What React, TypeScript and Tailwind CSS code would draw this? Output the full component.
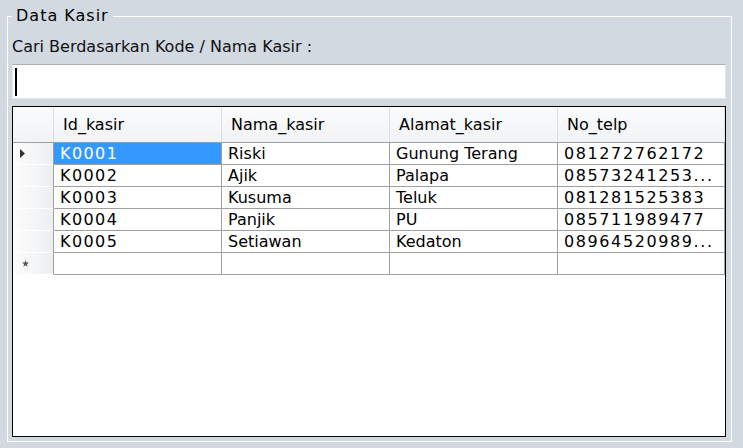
import React from "react";

interface KasirRow {
  id: string;
  nama: string;
  alamat: string;
  telp: string;
}

const rows: KasirRow[] = [
  { id: "K0001", nama: "Riski", alamat: "Gunung Terang", telp: "081272762172" },
  { id: "K0002", nama: "Ajik", alamat: "Palapa", telp: "08573241253..." },
  { id: "K0003", nama: "Kusuma", alamat: "Teluk", telp: "081281525383" },
  { id: "K0004", nama: "Panjik", alamat: "PU", telp: "085711989477" },
  { id: "K0005", nama: "Setiawan", alamat: "Kedaton", telp: "08964520989..." },
];

const headers = ["Id_kasir", "Nama_kasir", "Alamat_kasir", "No_telp"];

const gridCols = "grid grid-cols-[41px_168px_168px_168px_1fr]";

const RowHeader: React.FC<{ current?: boolean; isNew?: boolean }> = ({ current, isNew }) => (
  <div className="h-[22px] flex items-center pl-[7px] border-r border-r-[#a0a0a0] border-b border-b-white bg-gradient-to-r from-[#fdfdfd] to-[#eceef1]">
    {current && (
      <svg width="6" height="9" viewBox="0 0 6 9">
        <path d="M0 0 L5 4.5 L0 9 Z" fill="#333" />
      </svg>
    )}
    {isNew && (
      <svg width="7" height="7" viewBox="0 0 10 10" className="ml-[2px]">
        <path d="M5 0 L6.2 3.5 L10 3.6 L7 5.9 L8.1 9.6 L5 7.4 L1.9 9.6 L3 5.9 L0 3.6 L3.8 3.5 Z" fill="#555" />
      </svg>
    )}
  </div>
);

const Cell: React.FC<{ children?: React.ReactNode; selected?: boolean; tracking?: string }> = ({
  children,
  selected,
  tracking = "",
}) => (
  <div
    className={`h-[22px] flex items-center pl-[6px] border-r border-b border-[#a0a0a0] whitespace-nowrap overflow-hidden ${
      selected ? "bg-[#3399ff] text-white" : "bg-white"
    } ${tracking}`}
  >
    {children}
  </div>
);

export default function App() {
  return (
    <div className="w-[743px] h-[448px] bg-[#d2d9e1] pl-[7px] pt-[6px] overflow-hidden font-['DejaVu_Sans',sans-serif] text-[16px] text-black">
      <fieldset className="w-[725px] h-[436px] border border-white pl-[4px] pr-[5px] pb-[4px] flex flex-col">
        <legend className="px-[4px] leading-[20px] tracking-[1px]">Data Kasir</legend>

        <div className="mt-[11px] leading-[20px] text-[#111]">Cari Berdasarkan Kode / Nama Kasir :</div>

        {/* search box */}
        <div className="mt-[7px] h-[35px] bg-white border border-[#e2e6ea] border-t-[#a9aeb4] flex items-center pl-[2px]">
          <span className="w-[2px] h-[28px] bg-black" />
        </div>

        {/* grid */}
        <div className="mt-[7px] flex-1 border border-black bg-white overflow-hidden">
          <div className={`${gridCols} h-[36px] border-b border-[#a0a0a0] bg-gradient-to-b from-[#fafbfc] to-[#f1f3f5]`}>
            <div className="border-r border-[#dadde1]" />
            {headers.map((h) => (
              <div key={h} className="flex items-center pl-[9px] border-r border-[#dadde1]">
                {h}
              </div>
            ))}
          </div>

          {rows.map((r, i) => (
            <div key={r.id} className={gridCols}>
              <RowHeader current={i === 0} />
              <Cell selected={i === 0} tracking="tracking-[1.4px]">
                {r.id}
              </Cell>
              <Cell>{r.nama}</Cell>
              <Cell>{r.alamat}</Cell>
              <Cell tracking="tracking-[1.6px]">{r.telp}</Cell>
            </div>
          ))}

          <div className={gridCols}>
            <RowHeader isNew />
            <Cell />
            <Cell />
            <Cell />
            <Cell />
          </div>
        </div>
      </fieldset>
    </div>
  );
}
